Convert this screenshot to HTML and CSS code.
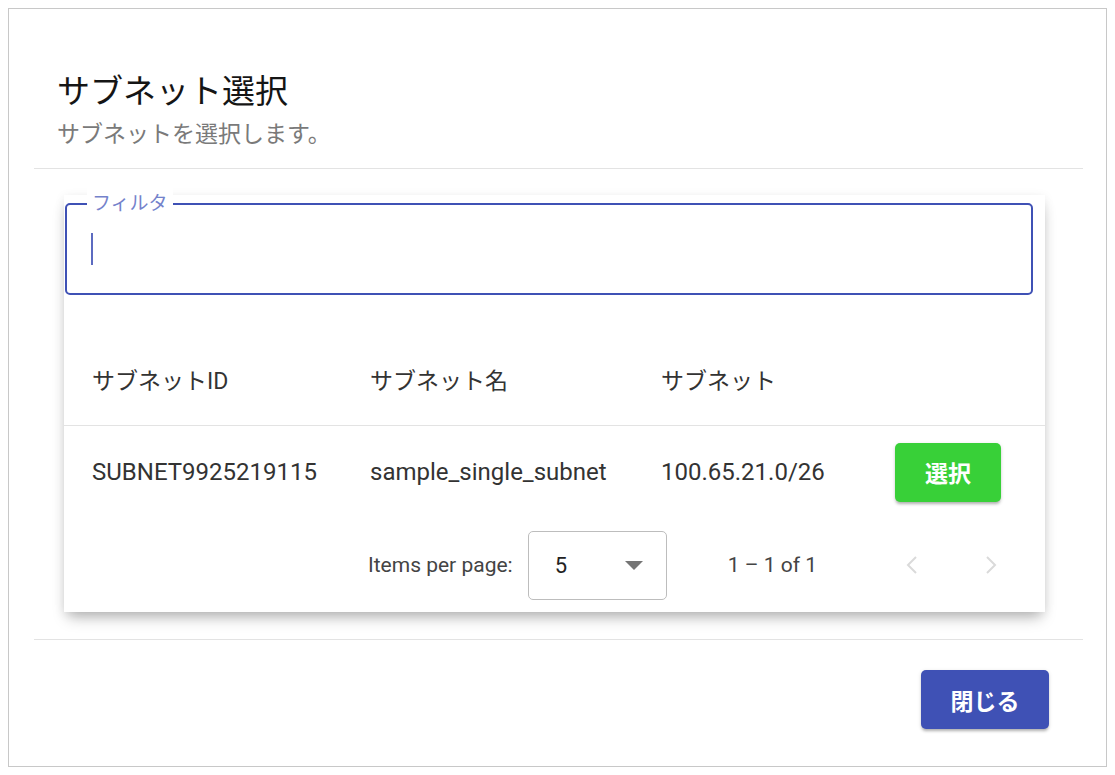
FILE: index.html
```html
<!DOCTYPE html>
<html lang="ja">
<head>
<meta charset="utf-8">
<title>サブネット選択</title>
<link rel="stylesheet" href="styles.css">
</head>
<body>
<div class="dialog">
  <header class="dlg-header">
    <h1 class="dlg-title">サブネット選択</h1>
    <p class="dlg-sub">サブネットを選択します。</p>
  </header>
  <main class="dlg-content">
    <section class="card">
      <div class="field">
        <span class="field-label">フィルタ</span>
        <span class="caret"></span>
      </div>
      <div class="grid head">
        <div class="cell">サブネットID</div>
        <div class="cell">サブネット名</div>
        <div class="cell">サブネット</div>
        <div class="cell"></div>
      </div>
      <div class="grid row">
        <div class="cell">SUBNET9925219115</div>
        <div class="cell">sample_single_subnet</div>
        <div class="cell">100.65.21.0/26</div>
        <div class="cell"><button class="btn btn-green">選択</button></div>
      </div>
      <div class="paginator">
        <span class="pg-label">Items per page:</span>
        <div class="pg-select">
          <span class="pg-value">5</span>
          <svg class="pg-arrow" width="18" height="9" viewBox="0 0 18 9"><path d="M0 0 L18 0 L9 9 Z" fill="#757575"/></svg>
        </div>
        <span class="pg-range">1 – 1 of 1</span>
        <span class="pg-nav">
          <svg width="14" height="20" viewBox="0 0 14 20"><path d="M12 2 L4 10 L12 18" fill="none" stroke="#dadada" stroke-width="2"/></svg>
        </span>
        <span class="pg-nav">
          <svg width="14" height="20" viewBox="0 0 14 20"><path d="M2 2 L10 10 L2 18" fill="none" stroke="#dadada" stroke-width="2"/></svg>
        </span>
      </div>
    </section>
  </main>
  <footer class="dlg-footer">
    <button class="btn btn-indigo">閉じる</button>
  </footer>
</div>
</body>
</html>
```

FILE: styles.css
```css
html, body {
  background: #ffffff;
}
body {
  margin: 8px;
  font-family: Roboto, "Noto Sans CJK JP", sans-serif;
}
.dialog {
  box-sizing: border-box;
  height: 759px;
  border: 1px solid #c8c8c8;
  box-shadow: 1px 1px 3px rgba(0, 0, 0, 0.4);
  display: flex;
  flex-direction: column;
  padding: 0 23px 0 25px;
  background: #fff;
}
.dlg-header {
  padding: 60px 0 21px 23px;
  border-bottom: 1px solid #e3e3e3;
}
.dlg-title {
  margin: 0;
  font-family: "Noto Sans CJK JP", sans-serif;
  font-weight: 400;
  font-size: 33px;
  line-height: 40px;
  color: #151515;
}
.dlg-sub {
  margin: 8px 0 0;
  font-family: "Noto Sans CJK JP", sans-serif;
  font-size: 23px;
  line-height: 30px;
  color: #7a7a7a;
}
.dlg-content {
  flex: 1;
  padding: 26px 0 0 30px;
  border-bottom: 1px solid #e3e3e3;
}
.card {
  width: 981px;
  box-sizing: border-box;
  padding-top: 8px;
  background: #fff;
  box-shadow: 0 9px 14px -4px rgba(0, 0, 0, 0.28), 0 2px 10px rgba(0, 0, 0, 0.08);
}
.field {
  position: relative;
  margin-left: 1px;
  width: 968px;
  height: 92px;
  box-sizing: border-box;
  border: 2px solid #3f51b5;
  border-radius: 5px;
}
.field-label {
  position: absolute;
  left: 20px;
  top: -17px;
  padding: 0 5px;
  background: #fff;
  font-family: "Noto Sans CJK JP", sans-serif;
  font-size: 19px;
  line-height: 28px;
  color: #7482cb;
}
.caret {
  position: absolute;
  left: 24px;
  top: 28px;
  width: 2px;
  height: 32px;
  background: #5c6bc0;
}
.grid {
  display: grid;
  grid-template-columns: 278px 291px 234px 1fr;
  padding-left: 28px;
  align-items: center;
}
.head {
  margin-top: 38px;
  height: 92px;
  border-bottom: 1px solid #e3e3e3;
}
.row {
  height: 92px;
}
.cell {
  font-size: 24px;
  color: #333;
}
.head .cell {
  font-size: 23px;
}
.btn {
  border: none;
  border-radius: 5px;
  color: #fff;
  font-family: "Noto Sans CJK JP", sans-serif;
  font-weight: 700;
  font-size: 23px;
  cursor: pointer;
  box-shadow: 0 3px 3px -1px rgba(0, 0, 0, 0.25), 0 1px 4px rgba(0, 0, 0, 0.12);
}
.btn-green {
  width: 106px;
  height: 59px;
  background: #38d038;
}
.btn-indigo {
  width: 128px;
  height: 59px;
  background: #3f51b5;
}
.paginator {
  display: flex;
  align-items: center;
  justify-content: flex-end;
  height: 94px;
  padding-right: 46px;
  color: #444;
}
.pg-label {
  font-size: 21px;
  margin-right: 15px;
}
.pg-select {
  box-sizing: border-box;
  width: 139px;
  height: 69px;
  border: 1px solid #bdbdbd;
  border-radius: 5px;
  display: flex;
  align-items: center;
  justify-content: space-between;
  padding: 0 23px 0 26px;
  margin-right: 61px;
}
.pg-value {
  font-size: 22px;
  color: #222;
}
.pg-range {
  font-size: 21px;
  margin-right: 87px;
}
.pg-nav {
  display: flex;
  width: 14px;
  justify-content: center;
}
.pg-nav + .pg-nav {
  margin-left: 67px;
}
.dlg-footer {
  display: flex;
  justify-content: flex-end;
  padding: 30px 34px 37px 0;
}
```
